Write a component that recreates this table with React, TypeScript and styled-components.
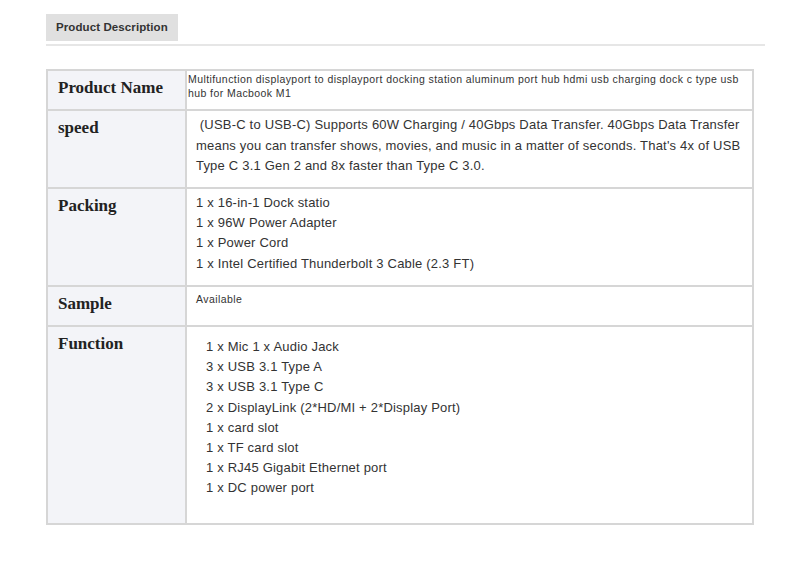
import styled, { createGlobalStyle } from "styled-components";

const GlobalStyle = createGlobalStyle`
  html, body {
    margin: 0;
    padding: 0;
    background: #ffffff;
  }
  body {
    font-family: "Liberation Sans", Arial, sans-serif;
    color: #333333;
  }
`;

const packing = [
  "1 x 16-in-1 Dock statio",
  "1 x 96W Power Adapter",
  "1 x Power Cord",
  "1 x Intel Certified Thunderbolt 3 Cable (2.3 FT)",
];

const functions = [
  "1 x Mic 1 x Audio Jack",
  "3 x USB 3.1 Type A",
  "3 x USB 3.1 Type C",
  "2 x DisplayLink (2*HD/MI + 2*Display Port)",
  "1 x card slot",
  "1 x TF card slot",
  "1 x RJ45 Gigabit Ethernet port",
  "1 x DC power port",
];

const App = () => {
  return (
    <Page>
      <GlobalStyle />
      <TabBar>
        <Tab>Product Description</Tab>
      </TabBar>

      <Table>
        <colgroup>
          <col style={{ width: 139 }} />
          <col />
        </colgroup>
        <tbody>
          <Tr height={40}>
            <Th>Product Name</Th>
            <Td $pad="1px 1px">
              <Small>
                Multifunction displayport to displayport docking station aluminum port hub hdmi usb charging dock c type usb hub for Macbook M1
              </Small>
            </Td>
          </Tr>
          <Tr height={78}>
            <Th>speed</Th>
            <Td $pad="4px 9px">
              <Para>
                &nbsp;(USB-C to USB-C) Supports 60W Charging / 40Gbps Data Transfer. 40Gbps Data Transfer means you can transfer shows, movies, and music in a matter of seconds. That's 4x of USB Type C 3.1 Gen 2 and 8x faster than Type C 3.0.
              </Para>
            </Td>
          </Tr>
          <Tr height={98}>
            <Th>Packing</Th>
            <Td $pad="4px 9px">
              {packing.map((line) => (
                <Line key={line}>{line}</Line>
              ))}
            </Td>
          </Tr>
          <Tr height={40}>
            <Th>Sample</Th>
            <Td $pad="5px 9px">
              <Small>Available</Small>
            </Td>
          </Tr>
          <Tr height={198}>
            <Th>Function</Th>
            <Td $pad="10px 19px">
              {functions.map((line) => (
                <Line key={line}>{line}</Line>
              ))}
            </Td>
          </Tr>
        </tbody>
      </Table>
    </Page>
  );
};

const Page = styled.div`
  width: 790px;
  height: 562px;
  box-sizing: border-box;
  padding: 14px 25px 0 46px;
`;

const TabBar = styled.div`
  display: flex;
  border-bottom: 2px solid #e6e6e6;
  padding-bottom: 3px;
  margin-bottom: 23px;
`;

const Tab = styled.div`
  background: #e0e0e0;
  color: #333333;
  font-size: 11.5px;
  letter-spacing: 0.1px;
  font-weight: 700;
  height: 27px;
  line-height: 27px;
  padding: 0 10px;
  width: 112px;
`;

const Table = styled.table`
  width: 708px;
  border-collapse: collapse;
  border: 2px solid #d6d6d6;
  table-layout: fixed;
`;

const Tr = styled.tr``;

const Th = styled.th`
  background: #f3f4f8;
  border: 2px solid #d6d6d6;
  text-align: left;
  vertical-align: top;
  padding: 7px 10px;
  font-family: "Liberation Serif", "Times New Roman", serif;
  font-size: 17px;
  font-weight: 700;
  color: #222222;
`;

const Td = styled.td<{ $pad: string }>`
  border: 2px solid #d6d6d6;
  vertical-align: top;
  padding: ${(p) => p.$pad};
  background: #ffffff;
`;

const Small = styled.div`
  font-size: 10.5px;
  letter-spacing: 0.42px;
  line-height: 14px;
  color: #333333;
`;

const Para = styled.div`
  font-size: 13px;
  letter-spacing: 0.2px;
  line-height: 20.5px;
  color: #333333;
`;

const Line = styled.div`
  font-size: 13px;
  letter-spacing: 0.2px;
  line-height: 20.2px;
  color: #333333;
`;

export default App;
